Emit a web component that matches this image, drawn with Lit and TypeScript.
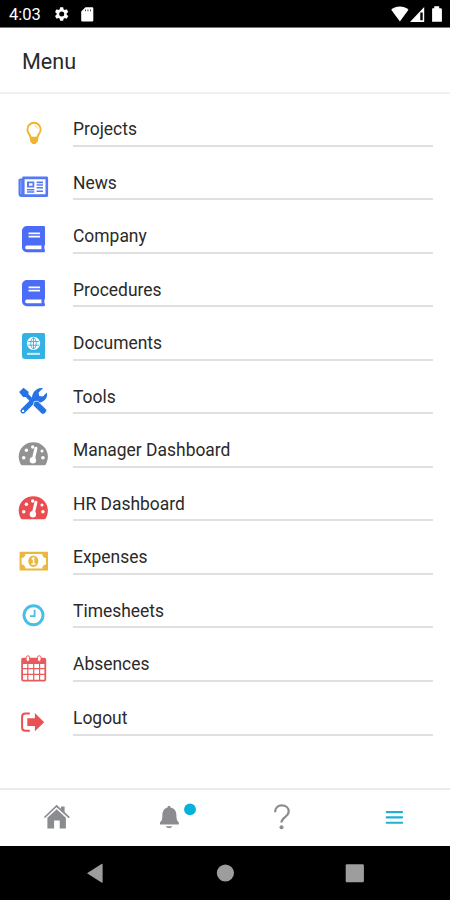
import { LitElement, html, svg, css } from "lit";
import { customElement } from "lit/decorators.js";

const book = svg`<path transform="translate(22 9) scale(.0513)" fill-rule="evenodd" d="M448 360V24c0-13.300-10.700-24-24-24H96C43 0 0 43 0 96v320c0 53 43 96 96 96h328c13.300 0 24-10.700 24-24v-16c0-7.500-3.500-14.300-8.900-18.700-4.200-15.400-4.200-59.300 0-74.700 5.400-4.300 8.900-11.100 8.900-18.600zM128 128h224v32H128zM128 192h224v32H128zM381.400 452H90c-17.700 0-28-16.300-28-34 0-17.600 10.400-38 28-38h291.400c-1.900 17.100-1.900 54 0 72z"/>`;

const gauge = svg`
  <path d="M33.300 11.200C25 11.200 18.700 17.500 18.700 25.600c0 2.900.8 5.400 2 7.600.4.700 1 1 1.700 1h21.800c.7 0 1.300-.3 1.700-1 1.200-2.200 2-4.700 2-7.600 0-8.100-6.400-14.400-14.600-14.400z"/>
  <g fill="#fff"><circle cx="26.400" cy="19.200" r="1.700"/><circle cx="32.700" cy="16" r="1.700"/><circle cx="42" cy="20" r="1.500"/><circle cx="23.700" cy="26.800" r="1.800"/><circle cx="42.900" cy="26.800" r="1.800"/><circle cx="32.900" cy="29.200" r="3.200"/></g>
  <path d="M33.200 28.800 35.900 17.300" stroke="#fff" stroke-width="3" stroke-linecap="round"/>`;

const items = [
  { label: "Projects", color: "#efb62c", icon: svg`
    <path fill="none" stroke="currentColor" stroke-width="1.900" d="M30.700 27.800c0-2.800-3.300-4.400-3.300-8.400a6.600 6.600 0 0 1 13.200 0c0 4-3.300 5.600-3.300 8.400z"/>
    <path d="M29.900 27h8.200v4l-1.500 1.500-1 1.500h-3.200l-1-1.500-1.500-1.500z"/>
    <path fill="none" stroke="currentColor" stroke-width="1" opacity=".65" d="M34.300 15.700c1.900.1 3 1.200 3.200 3"/>` },
  { label: "News", color: "#5579f5", icon: svg`
    <path fill-rule="evenodd" d="M23.600 12.600h23c.9 0 1.500.6 1.500 1.500v17.400c0 .9-.6 1.500-1.500 1.500H21.300c-1.600 0-2.800-1.200-2.800-2.700V16.200c0-1.100.7-1.800 1.800-1.800h1.800c0-1.200.5-1.800 1.500-1.800zM24.600 15.200v15h20.900v-15z"/>
    <path d="M20.900 16.200v14.100" stroke="#9fb3fb" stroke-width=".8"/>
    <path fill-rule="evenodd" d="M27 17.500h7.300v6H27zM29 19.300v2.400h3.500v-2.400zM36.600 17.500H43v1.700h-6.400zM36.600 20.200H43v1.600h-6.400zM36.600 23H43v1.600h-6.400zM27 25h7.300v1.500H27zM27 27.300h7.300v1.400H27zM36.600 26.500H43V28h-6.400z"/>` },
  { label: "Company", color: "#4a6cf7", icon: book },
  { label: "Procedures", color: "#4a6cf7", icon: book },
  { label: "Documents", color: "#34b2e3", icon: svg`
    <path d="M25.300 9h18.100c1 0 1.600.7 1.600 1.600v22.900c0 .9-.6 1.600-1.600 1.600H25.300A3.300 3.300 0 0 1 22 31.800V12.300A3.300 3.300 0 0 1 25.300 9z"/>
    <circle cx="33.500" cy="19.300" r="6.600" fill="#fff"/>
    <g fill="none" stroke="currentColor" stroke-width=".9"><ellipse cx="33.500" cy="19.300" rx="2.700" ry="5.500"/><path d="M33.500 13.800v11M28 17.500h11M28 21.200h11"/></g>
    <path d="M27 29.900h13" stroke="#c5ebfb" stroke-width="2.100"/>` },
  { label: "Tools", color: "#2573e6", icon: svg`
    <path fill="none" stroke="currentColor" stroke-width="5.200" stroke-linecap="round" d="M23 32.800 33.600 22.300"/>
    <path d="M32 21.200c-.6-5.900 4.500-12.400 11-11l-4.400 4.300.6 3.500 3.600.6 4.100-4.200c1.300 5.700-3.500 11.100-10 10.100l-2.400 2.100z"/>
    <path d="m23.500 9.700 5 4v2.600l5 5-2.800 2.800-5-5h-2.600l-4-5z"/>
    <path d="m34.200 23.600 3.700-.4 8.300 8.100c1.600 1.600-2.200 6.400-4.600 4.500l-8.400-8.200z" stroke="#fff" stroke-width=".7"/>
    <circle cx="23.100" cy="32.900" r="1.200" fill="#fff"/>` },
  { label: "Manager Dashboard", color: "#929292", icon: gauge },
  { label: "HR Dashboard", color: "#ea4d50", icon: gauge },
  { label: "Expenses", color: "#e9b83c", icon: svg`
    <path fill-rule="evenodd" d="M19.600 13.800H48v18.700H19.600zM25.400 15.900c0 2.300-1.500 4-3.800 4v6.500c2.300 0 3.800 1.700 3.800 4h16.800c0-2.300 1.500-4 3.800-4v-6.500c-2.300 0-3.800-1.700-3.800-4z"/>
    <ellipse cx="33.300" cy="23.200" rx="5" ry="5.800"/>
    <path d="m31.700 21.100 1.900-1.300v6.300m-2.100 0h4" fill="none" stroke="#fff" stroke-width="1.500"/>` },
  { label: "Timesheets", color: "#47bee6", icon: svg`
    <circle cx="33.500" cy="23.200" r="9.500" fill="none" stroke="currentColor" stroke-width="2.900"/>
    <path d="M34.600 17.800v6.400h-4.500" fill="none" stroke="currentColor" stroke-width="1.800"/>` },
  { label: "Absences", color: "#e95a5d", icon: svg`
    <path fill-rule="evenodd" d="M23.200 12.800h21c1.200 0 2 .8 2 2v19.700c0 1.200-.8 2-2 2h-21c-1.200 0-2-.8-2-2V14.800c0-1.200.8-2 2-2zM23 19v4h4.200v-4zM28.400 19v4h4.700v-4zM34.300 19v4H39v-4zM40.200 19v4h4.200v-4zM23 24.200v4.600h4.200v-4.600zM28.400 24.200v4.600h4.700v-4.600zM34.300 24.200v4.600H39v-4.600zM40.200 24.200v4.600h4.200v-4.600zM23 30v4.700h4.200V30zM28.400 30v4.700h4.700V30zM34.300 30v4.700H39V30zM40.200 30v4.700h4.200V30z"/>
    <g fill="#fff" stroke="currentColor" stroke-width="1"><rect x="26.100" y="10.800" width="3.500" height="5.700" rx="1.700"/><rect x="37.500" y="10.800" width="3.500" height="5.700" rx="1.700"/></g>` },
  { label: "Logout", color: "#ea5153", icon: svg`
    <path d="M29.800 14.600h-4.300q-3.400 0-3.400 3.300v10.600q0 3.300 3.400 3.300h4.300" fill="none" stroke="currentColor" stroke-width="2"/>
    <path d="M27.300 19.200h7.600v-5.100L44.200 23.200l-9.300 9.100v-5.400h-7.600z"/>` },
];

@customElement("app-root")
export class AppRoot extends LitElement {
  static styles = css`
    :host { display: flex; flex-direction: column; height: 900px; box-sizing: border-box; background: #fff; color: #2a2a2a; font-family: Roboto, sans-serif; overflow: hidden; }
    * { box-sizing: border-box; }
    svg { display: block; fill: currentColor; flex: none; }
    .status { height: 28px; flex: none; background: #000; color: #fff; border-bottom: 1px solid #777; display: flex; justify-content: space-between; }
    .time { font-size: 16.500px; line-height: 30px; padding-left: 9px; width: 50px; white-space: nowrap; }
    .left { display: flex; }
    .header { height: 66px; flex: none; border-bottom: 2px solid #f0f0f0; padding: 2px 22px 0; display: flex; align-items: center; font-size: 21.600px; }
    .list { flex: 1; padding-top: 16px; min-height: 0; }
    .row { height: 53.560px; display: flex; align-items: flex-start; }
    .label { margin-left: 23px; width: 360px; height: 36.500px; border-bottom: 2px solid #e0e0e0; font-size: 17.450px; line-height: 38px; }
    .tabs { height: 57.500px; flex: none; border-top: 2px solid #ebebeb; display: grid; grid-template-columns: repeat(4, 1fr); color: #8b8c8f; }
    .tab { display: flex; justify-content: center; }
    .active { color: #22b0d4; }
    .nav { height: 54.500px; flex: none; background: #000; color: #9d9d9d; display: flex; justify-content: space-between; padding: 0 80px; }
  `;

  render() {
    return html`
      <div class="status">
        <div class="left">
          <div class="time">4:03</div>
          <svg width="50" height="27" viewBox="50 0 50 27">
            <path d="m60.100 7.300-.3 2-1.300.7-1.900-.7-1.600 2.700 1.600 1.300v1.500L55 16.100l1.600 2.700 1.900-.7 1.300.7.300 2h3.100l.3-2 1.300-.7 1.900.7 1.600-2.700-1.600-1.300v-1.500l1.600-1.300-1.600-2.700-1.900.7-1.300-.7-.3-2zM61.700 11.600a2.500 2.500 0 1 1 0 5 2.500 2.500 0 0 1 0-5z" fill-rule="evenodd"/>
            <path fill-rule="evenodd" d="M85.400 7.200h6.500c.9 0 1.400.5 1.400 1.400v11.600c0 .8-.5 1.300-1.400 1.300H82.600c-.9 0-1.400-.5-1.400-1.300v-8.700zM85.200 9.400v1.900h.7V9.400zM87.600 9.400v1.900h.7V9.400zM90 9.400v1.900h.7V9.400z"/>
          </svg>
        </div>
        <svg width="60" height="27" viewBox="390 0 60 27">
          <path d="M391.200 9.800c5-4.400 12.300-4.400 17.300 0L399.900 21.600z"/>
          <path fill-rule="evenodd" d="M424.200 7v14.900H410zM420.300 12.500v7.800h2.400v-7.800z"/>
          <path d="M432.500 8.200h1.700V6.300h5v1.900h1.400q1.300 0 1.300 1.300v12.200h-9.800V9.500q0-1.300.4-1.300z"/>
        </svg>
      </div>
      <div class="header">Menu</div>
      <div class="list">
        ${items.map((item) => html`
          <div class="row">
            <svg width="50" height="44" viewBox="0 0 50 44" style="color:${item.color}">${item.icon}</svg>
            <div class="label">${item.label}</div>
          </div>`)}
      </div>
      <div class="tabs">
        <div class="tab"><svg width="40" height="50" viewBox="36 790 40 50">
          <path d="M44.500 817.500 56.600 806l12.700 11.700" fill="none" stroke="currentColor" stroke-width="1.700"/>
          <path d="M61 806.500h3.600v7.500L61 810.700zM56.700 809.300l9.200 8.500v10.800h-6.200v-8.100h-5.600v8.100h-6.700v-10.800z"/>
        </svg></div>
        <div class="tab"><svg width="56" height="50" viewBox="141 790 56 50">
          <path d="M169 805.800c1 0 1.500.7 1.500 1.700 4.200.8 5.900 3.900 5.900 7.500 0 3.500.3 5.500 2.400 7.300v2.200H160v-2.200c2.100-1.800 2.400-3.800 2.400-7.300 0-3.600 1.700-6.700 5.100-7.500 0-1 .5-1.700 1.500-1.700zM165.800 826.200h6.600c-.5 2.400-6.100 2.400-6.600 0z"/>
          <circle cx="190" cy="809.400" r="5.900" fill="#08b0dc"/>
        </svg></div>
        <div class="tab"><svg width="40" height="50" viewBox="261 790 40 50">
          <path d="M275.100 812.200c0-4.200 2.700-6.900 6.700-6.900 4.100 0 6.900 2.500 6.900 6.200 0 5.400-7.300 5.800-7.300 11" fill="none" stroke="currentColor" stroke-width="2.200"/>
          <circle cx="281.500" cy="827.200" r="2"/>
        </svg></div>
        <div class="tab active"><svg width="40" height="50" viewBox="374 790 40 50">
          <path d="M386.700 812.100h15.400M386.700 817.400h15.400M386.700 822.700h15.400" stroke="currentColor" stroke-width="2.100" stroke-linecap="round"/>
        </svg></div>
      </div>
      <div class="nav">
        <svg width="30" height="54" viewBox="80 846 30 54"><path d="M87 873.300 101.500 864q1.100-.5 1.100.8v17q0 1.300-1.100.8z"/></svg>
        <svg width="30" height="54" viewBox="210 846 30 54"><circle cx="225.400" cy="873" r="8.600"/></svg>
        <svg width="30" height="54" viewBox="340 846 30 54"><rect x="345.700" y="864.300" width="18.200" height="18" rx="1.200"/></svg>
      </div>`;
  }
}
